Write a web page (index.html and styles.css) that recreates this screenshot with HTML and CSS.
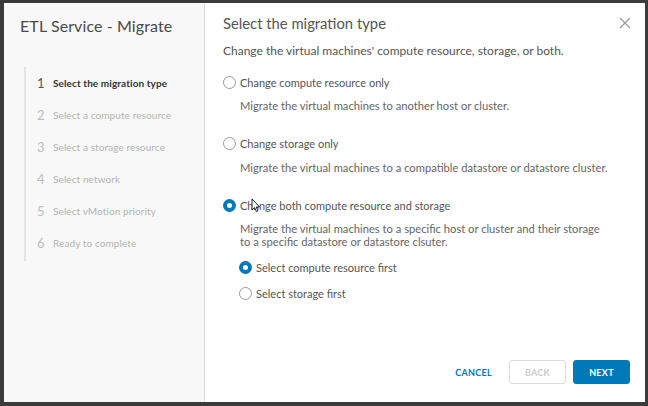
FILE: index.html
```html
<!DOCTYPE html>
<html>
<head>
<meta charset="utf-8">
<link rel="stylesheet" href="styles.css">
</head>
<body>
<div class="frame">
  <div class="dialog">
    <aside class="sidebar">
      <h1 class="wiz-title">ETL Service - Migrate</h1>
      <ol class="steps">
        <li class="step active"><span class="num">1</span><span class="lbl">Select the migration type</span></li>
        <li class="step"><span class="num">2</span><span class="lbl">Select a compute resource</span></li>
        <li class="step"><span class="num">3</span><span class="lbl">Select a storage resource</span></li>
        <li class="step"><span class="num">4</span><span class="lbl">Select network</span></li>
        <li class="step"><span class="num">5</span><span class="lbl">Select vMotion priority</span></li>
        <li class="step"><span class="num">6</span><span class="lbl">Ready to complete</span></li>
      </ol>
    </aside>
    <main class="content">
      <div class="head">
        <h2 class="page-title">Select the migration type</h2>
        <svg class="close" width="12" height="12" viewBox="0 0 12 12"><path d="M1 1 L11 11 M11 1 L1 11" stroke="#9a9a9a" stroke-width="1.2" fill="none"/></svg>
      </div>
      <p class="intro">Change the virtual machines' compute resource, storage, or both.</p>

      <div class="option">
        <div class="radio-row"><span class="radio"></span><span class="rlabel">Change compute resource only</span></div>
        <p class="desc">Migrate the virtual machines to another host or cluster.</p>
      </div>
      <div class="option">
        <div class="radio-row"><span class="radio"></span><span class="rlabel">Change storage only</span></div>
        <p class="desc">Migrate the virtual machines to a compatible datastore or datastore cluster.</p>
      </div>
      <div class="option">
        <div class="radio-row"><span class="radio checked"></span><span class="rlabel">Change both compute resource and storage</span>
          <svg class="cursor" width="10" height="15" viewBox="0 0 10 15"><path d="M1 1 L1 12 L3.6 9.6 L5.4 13.6 L7 12.9 L5.2 9 L8.6 9 Z" fill="#fff" stroke="#222" stroke-width="1"/></svg>
        </div>
        <p class="desc">Migrate the virtual machines to a specific host or cluster and their storage<br>to a specific datastore or datastore clsuter.</p>
        <div class="sub">
          <div class="radio-row"><span class="radio checked"></span><span class="rlabel">Select compute resource first</span></div>
          <div class="radio-row"><span class="radio"></span><span class="rlabel">Select storage first</span></div>
        </div>
      </div>

      <div class="footer">
        <button class="btn link">CANCEL</button>
        <button class="btn outline" disabled>BACK</button>
        <button class="btn primary">NEXT</button>
      </div>
    </main>
  </div>
</div>
</body>
</html>
```

FILE: styles.css
```css
* { box-sizing: border-box; }
html, body { margin: 0; padding: 0; }
body {
  width: 648px;
  height: 406px;
  background: #3b3b3b;
  font-family: "Lato", "Liberation Sans", sans-serif;
  overflow: hidden;
}
.frame {
  padding: 3px 3px 4px 4px;
  height: 406px;
}
.dialog {
  display: flex;
  height: 399px;
  background: #fff;
}
.sidebar {
  width: 201px;
  background: #f8f8f8;
  border-right: 1px solid #dcdcdc;
  padding: 12px 0 0 16px;
}
.wiz-title {
  margin: 0;
  font-size: 16px;
  font-weight: 400;
  color: #4a4a4a;
  letter-spacing: 0.1px;
  line-height: 22px;
}
.steps {
  list-style: none;
  margin: 30px 0 0 4px;
  padding: 0 0 2px;
  border-left: 2px solid #e4e4e4;
}
.step {
  display: flex;
  align-items: center;
  height: 32px;
  padding-left: 11px;
}
.num {
  width: 16px;
  font-size: 13px;
  color: #bdbdbd;
}
.lbl {
  font-size: 10px;
  color: #b3b3b3;
  letter-spacing: 0.1px;
}
.step.active .num { color: #555; }
.step.active .lbl { color: #333; font-weight: 700; }

.content {
  flex: 1;
  position: relative;
  padding: 10px 0 0 18px;
  display: flex;
  flex-direction: column;
}
.head {
  display: flex;
  justify-content: space-between;
  align-items: center;
  padding-right: 14px;
}
.page-title {
  margin: 0;
  font-size: 14.8px;
  font-weight: 400;
  color: #555;
  line-height: 20px;
}
.intro {
  margin: 11px 0 0;
  font-size: 12px;
  color: #555;
  line-height: 14px;
}
.option { margin-top: 16px; }
.option + .option { margin-top: 23px; }
.radio-row {
  display: flex;
  align-items: center;
  height: 16px;
  position: relative;
}
.radio {
  width: 13px;
  height: 13px;
  border-radius: 50%;
  border: 1px solid #9a9a9a;
  background: #fff;
  margin-left: 0;
  margin-right: 4px;
  flex: none;
}
.radio.checked {
  border: 4px solid #0079b8;
}
.rlabel {
  font-size: 11px;
  color: #555;
}
.desc {
  margin: 10px 0 0 17px;
  font-size: 11.2px;
  line-height: 12.5px;
  color: #666;
}
.sub {
  margin: 11px 0 0 16px;
  display: flex;
  flex-direction: column;
  gap: 10px;
}
.cursor {
  position: absolute;
  left: 28px;
  top: 1px;
}
.footer {
  margin-top: auto;
  display: flex;
  justify-content: flex-end;
  align-items: center;
  gap: 7px;
  padding: 0 15px 18px 0;
}
.btn {
  font-family: "Lato", "Liberation Sans", sans-serif;
  font-size: 9px;
  font-weight: 700;
  letter-spacing: 0.3px;
  height: 24px;
  border-radius: 3px;
  cursor: pointer;
}
.btn.link {
  background: none;
  border: none;
  color: #0079b8;
  padding: 0 10px;
  margin-right: 0;
}
.btn.outline {
  width: 57px;
  background: #fff;
  border: 1px solid #ddd;
  color: #ccc;
}
.btn.primary {
  width: 57px;
  background: #0079b8;
  border: 1px solid #0079b8;
  color: #fff;
}
```
